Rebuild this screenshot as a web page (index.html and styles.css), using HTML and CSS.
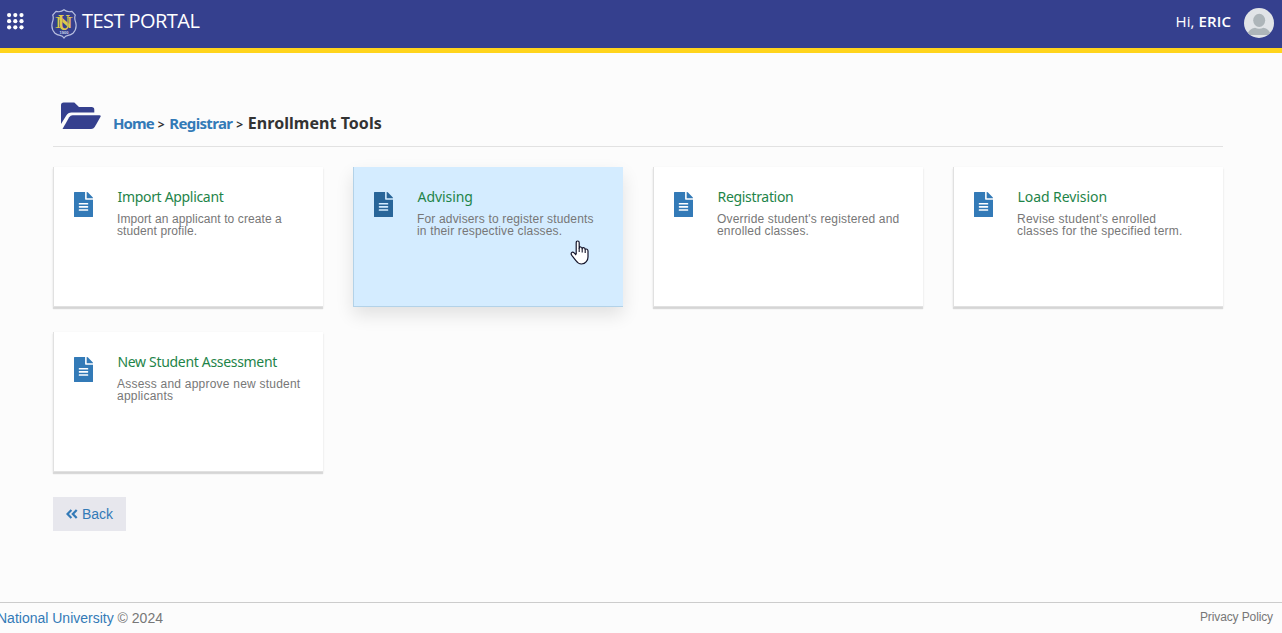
FILE: index.html
```html
<!DOCTYPE html>
<html lang="en">
<head>
<meta charset="utf-8">
<title>Enrollment Tools</title>
<link rel="stylesheet" href="styles.css">
</head>
<body>
<svg class="defs" aria-hidden="true">
  <symbol id="doc" viewBox="0 0 384 512" preserveAspectRatio="none">
    <path fill="currentColor" d="M224 136V0H12Q0 0 0 12V500Q0 512 12 512H372Q384 512 384 500V160H248Q224 160 224 136ZM288 372Q288 384 276 384H108Q96 384 96 372V364Q96 352 108 352H276Q288 352 288 364ZM288 308Q288 320 276 320H108Q96 320 96 308V300Q96 288 108 288H276Q288 288 288 300ZM288 236V244Q288 256 276 256H108Q96 256 96 244V236Q96 224 108 224H276Q288 224 288 236ZM384 122V128H256V0H262Q272 0 279 7L377 105Q384 112 384 122Z"/>
  </symbol>
</svg>
<header class="topbar">
  <svg class="apps" viewBox="0 0 17 17" fill="#fff"><circle cx="2.1" cy="2.1" r="2.1"/><circle cx="8.3" cy="2.1" r="2.1"/><circle cx="14.5" cy="2.1" r="2.1"/><circle cx="2.1" cy="8.2" r="2.1"/><circle cx="8.3" cy="8.2" r="2.1"/><circle cx="14.5" cy="8.2" r="2.1"/><circle cx="2.1" cy="14.3" r="2.1"/><circle cx="8.3" cy="14.3" r="2.1"/><circle cx="14.5" cy="14.3" r="2.1"/></svg>
  <svg class="crest" viewBox="0 0 26 30">
    <path d="M13 .8Q10 3.6 5 2.4L1.7 6Q3 9 1.3 13.5Q-.3 20 4 24.2Q6 26 9 26.4Q11.8 27 13 29Q14.2 27 17 26.4Q20 26 22 24.2Q26.3 20 24.7 13.5Q23 9 24.3 6L21 2.4Q16 3.6 13 .8Z" fill="none" stroke="#b9bfe0" stroke-width="1.2"/>
    <g class="monogram">
      <text class="crest-n" transform="translate(13 18.8) scale(1.55 1)">N</text>
      <text class="crest-u" transform="translate(13 21) scale(.72 1)">U</text>
    </g>
    <text class="crest-year" x="13" y="25.4">1900</text>
  </svg>
  <span class="brand">TEST PORTAL</span>
  <span class="greeting">Hi, <b>ERIC</b></span>
  <svg class="avatar" viewBox="0 0 30 30"><defs><clipPath id="round"><circle cx="15" cy="15" r="15"/></clipPath></defs><g clip-path="url(#round)"><path fill="#e1e4e7" d="M0 0h30v30H0z"/><ellipse cx="15.2" cy="12.3" rx="6" ry="6.6" fill="#adb5b9"/><path fill="#adb5b9" d="M3 27Q5 20.5 11 19.7Q15 22 19.5 19.7Q25 20.5 27 27Z"/></g></svg>
</header>
<main class="content">
  <nav class="crumbs">
    <svg class="folder" viewBox="0 0 40 28" fill="#35408e"><path d="M0 22V3.2Q0 .5 2.7.5H13.3L18 5H30.5Q33.3 5 33.3 7.8V10.5H10.5Q7 10.5 5.3 13.4Z"/><path d="M1.5 27 8.2 15.2Q9.4 13.2 11.6 13.2H38.4Q40.4 13.2 39.4 15L33.7 25Q32.5 27 30.2 27Z"/></svg>
    <div class="trail"><a class="home">Home</a><span class="sep">&gt;</span><a class="registrar">Registrar</a><span class="sep">&gt;</span><span class="current">Enrollment Tools</span></div>
  </nav>
  <section class="cards">
    <article class="card"><svg class="doc"><use href="#doc"/></svg><div><h2>Import Applicant</h2><p class="tight">Import an applicant to create a<br>student profile.</p></div></article>
    <article class="card active"><svg class="doc"><use href="#doc"/></svg><div><h2 class="wide">Advising</h2><p>For advisers to register students<br>in their respective classes.</p></div>
      <svg class="cursor" viewBox="0 0 19 25"><path d="M6.2 14V2.8Q6.2 1 7.7 1T9.2 2.8V8.2Q9.5 6.8 10.8 7T12.2 8.6Q12.8 7.4 14 7.8T15.2 9.4Q16 8.7 17 9.2T18 11V17Q18 20 16.3 21.6Q14.5 24 11.5 24Q8 24 6.1 20.8L1.8 15.3Q.6 13.6 1.6 12.6Q2.8 11.6 4.4 13.1L6.2 15" fill="#fff" stroke="#14142a" stroke-width="1.2" stroke-linejoin="round"/><path d="M9.2 8v4M12.2 8.6V12.5M15.2 9.4V13" stroke="#14142a" stroke-width="1.1"/></svg>
    </article>
    <article class="card"><svg class="doc"><use href="#doc"/></svg><div><h2>Registration</h2><p>Override student's registered and<br>enrolled classes.</p></div></article>
    <article class="card"><svg class="doc"><use href="#doc"/></svg><div><h2 class="wide">Load Revision</h2><p class="loose">Revise student's enrolled<br>classes for the specified term.</p></div></article>
    <article class="card"><svg class="doc"><use href="#doc"/></svg><div><h2>New Student Assessment</h2><p class="loose">Assess and approve new student<br>applicants</p></div></article>
  </section>
  <a class="back"><svg class="chevrons" viewBox="0 0 12 10"><path d="M5.4 1 1.5 5l3.9 4M10.7 1 6.8 5l3.9 4" fill="none" stroke="#337ab7" stroke-width="2.2"/></svg>Back</a>
</main>
<footer class="footer"><div class="owner"><a>National University</a> © 2024</div><div class="privacy">Privacy Policy</div></footer>
</body>
</html>
```
FILE: styles.css
```css
* { box-sizing: border-box; }
body { margin: 0; height: 633px; overflow: hidden; display: flex; flex-direction: column; background: #fcfcfc; color: #777; font-family: "Liberation Sans", Arial, sans-serif; font-size: 14px; }
.defs { display: none; }
.topbar { height: 53px; flex: none; display: flex; align-items: flex-start; padding: 0 8px 0 7px; background: #35408e; border-bottom: 5px solid #ffd41c; color: #fff; font-family: "Open Sans", "Noto Sans", sans-serif; }
.apps { width: 17px; height: 17px; margin-top: 13px; }
.crest { width: 26px; height: 30px; margin: 9px 0 0 27px; }
.monogram { fill: #dec84c; text-anchor: middle; font-family: "Liberation Serif", serif; font-weight: bold; paint-order: stroke; stroke: #35408e; stroke-width: .5px; }
.crest-n { font-size: 16px; }
.crest-u { font-size: 23px; }
.crest-year { font: bold 4px "Liberation Sans", sans-serif; fill: #d5d9ee; text-anchor: middle; }
.brand { margin: 7px 0 0 5px; font-size: 20px; line-height: 27px; letter-spacing: -.55px; white-space: nowrap; }
.greeting { margin: 10px 13px 0 auto; font-size: 15px; line-height: 22px; letter-spacing: .1px; white-space: nowrap; }
.greeting b { font-weight: 600; }
.avatar { width: 30px; height: 30px; margin-top: 8px; }
.content { width: 1170px; margin: 0 0 0 53px; flex: 1; }
.crumbs { height: 94px; display: flex; border-bottom: 1px solid #e2e2e2; padding-left: 8px; }
.folder { width: 40px; height: 28px; margin: 49px 12px 0 0; }
.trail { display: flex; align-items: baseline; height: 25px; margin-top: 58px; font: bold 15px/24px "Noto Sans", sans-serif; color: #333; white-space: nowrap; }
.sep { margin: 0 4.6px 0 4px; font-size: 12px; }
.trail a, .footer a { color: #337ab7; }
.home { letter-spacing: -.9px; }
.registrar { letter-spacing: -.65px; }
.current { font-size: 16px; letter-spacing: .04px; }
.cards { display: grid; grid-template-columns: repeat(4, 270px); grid-auto-rows: 140px; gap: 25px 30px; margin-top: 20px; }
.card { position: relative; display: flex; padding: 24px 0 0 20px; border-left: 1px solid #e1e1e1; border-bottom: 1px solid #e1e1e1; background: #fff; box-shadow: 0 2px 1px rgba(0,0,0,.12), 0 1px 3px rgba(0,0,0,.06); }
.card.active { background: #d4ecff; border-color: #b3d2e8; box-shadow: 0 8px 17px rgba(0,0,0,.11); }
.doc { width: 19px; height: 25px; margin: 1px 25px 0 0; color: #337ab7; flex: none; }
.active .doc { color: #286599; }
h2 { margin: -5px 0 0 -.5px; font: 14px/22px "Noto Sans", sans-serif; letter-spacing: -.32px; color: #1e8449; white-space: nowrap; }
h2.wide { letter-spacing: -.07px; }
.card p { margin: 5px 0 0 -1px; font-size: 12px; line-height: 12px; letter-spacing: .16px; white-space: nowrap; }
.card .tight { letter-spacing: .09px; }
.card .loose { letter-spacing: .22px; }
.cursor { position: absolute; left: 216px; top: 73px; width: 19px; height: 25px; }
.back { display: flex; width: 73px; height: 34px; align-items: center; margin-top: 25px; padding-left: 13px; background: #e7e7ed; color: #337ab7; font-size: 14px; }
.chevrons { width: 12px; height: 10px; margin-right: 4px; }
.footer { height: 31px; flex: none; display: flex; justify-content: space-between; border-top: 1px solid #ccc; padding: 7px 9px 0 0; }
.owner { margin-left: -3px; line-height: 17px; }
.privacy { font-size: 12px; line-height: 14px; letter-spacing: -.12px; }
```
